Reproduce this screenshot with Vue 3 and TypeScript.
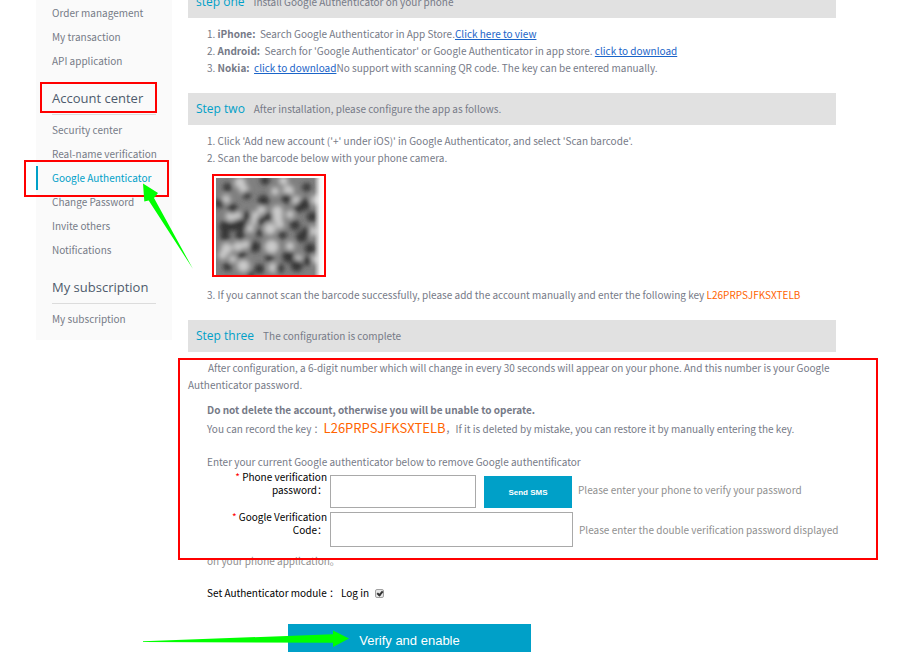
<script setup lang="ts">
import { ref } from 'vue'

interface MenuGroup {
  title: string
  items: string[]
}

const groups: MenuGroup[] = [
  { title: '', items: ['Order management', 'My transaction', 'API application'] },
  {
    title: 'Account center',
    items: [
      'Security center',
      'Real-name verification',
      'Google Authenticator',
      'Change Password',
      'Invite others',
      'Notifications',
    ],
  },
  { title: 'My subscription', items: ['My subscription'] },
]
const active = 'Google Authenticator'
const secret = 'L26PRPSJFKSXTELB'

const smsCode = ref('')
const googleCode = ref('')
const onLogin = ref(true)

// x, y, radius of the smudges in the obscured barcode
const dark: number[][] = [
  [34, 28, 13], [272, 28, 13], [34, 267, 13], [142, 68, 17], [157, 117, 14], [72, 142, 20],
  [27, 147, 18], [50, 146, 14], [27, 174, 15], [72, 174, 14], [264, 80, 18], [248, 90, 14],
  [287, 117, 15], [212, 62, 15], [117, 207, 17], [77, 232, 13], [257, 177, 17], [270, 160, 12],
  [282, 212, 16], [217, 237, 18], [242, 264, 18], [147, 7, 14], [134, 130, 12], [50, 92, 15],
  [237, 142, 15], [92, 114, 13], [10, 77, 14], [275, 250, 14], [160, 240, 13], [130, 274, 15],
  [192, 272, 13], [92, 52, 12], [130, 166, 11], [200, 172, 12], [104, 290, 10],
]
const light: number[][] = [
  [72, 14, 17], [84, 34, 14], [217, 38, 17], [184, 100, 17], [184, 118, 17], [44, 115, 15],
  [64, 115, 14], [82, 264, 19], [167, 207, 21], [32, 212, 17], [66, 206, 15], [90, 200, 12],
  [242, 68, 14], [137, 95, 13], [162, 153, 18], [202, 8, 14], [30, 64, 13], [118, 112, 12],
  [115, 130, 11], [192, 140, 13], [292, 160, 15], [247, 243, 11], [172, 270, 15],
  [222, 205, 13], [102, 152, 12], [297, 245, 13], [20, 232, 13], [177, 40, 12],
  [300, 66, 16], [222, 110, 12], [50, 244, 11],
]
</script>

<template>
  <div class="page">
    <nav class="sidebar">
      <section v-for="(g, i) in groups" :key="i">
        <h2 v-if="g.title">{{ g.title }}</h2>
        <ul>
          <li v-for="item in g.items" :key="item" :class="{ active: item === active }">
            <a href="#">{{ item }}</a>
          </li>
        </ul>
      </section>
    </nav>

    <main class="content">
      <header class="bar first"><h3>step one</h3><span>Install Google Authenticator on your phone</span></header>
      <div class="steps">
        <p>1. <b>iPhone:</b>&nbsp; Search Google Authenticator in App Store.<a href="#">Click here to view</a></p>
        <p>2. <b>Android:</b>&nbsp; Search for 'Google Authenticator' or Google Authenticator in app store. <a href="#">click to download</a></p>
        <p>3. <b>Nokia:</b>&nbsp; <a href="#">click to download</a>No support with scanning QR code. The key can be entered manually.</p>
      </div>

      <header class="bar"><h3>Step two</h3><span>After installation, please configure the app as follows.</span></header>
      <div class="steps">
        <p>1. Click 'Add new account ('+' under iOS)' in Google Authenticator, and select 'Scan barcode'.</p>
        <p>2. Scan the barcode below with your phone camera.</p>
        <div class="qr">
          <svg viewBox="0 0 324 292" preserveAspectRatio="none" aria-hidden="true">
            <defs>
              <filter id="smudge" x="-10%" y="-10%" width="120%" height="120%">
                <feGaussianBlur stdDeviation="8" />
              </filter>
              <linearGradient id="fade">
                <stop offset="0" stop-color="#fff" stop-opacity="0" />
                <stop offset="0.6" stop-color="#fff" stop-opacity="0.9" />
                <stop offset="1" stop-color="#fff" />
              </linearGradient>
            </defs>
            <rect width="324" height="292" fill="#808080" />
            <g filter="url(#smudge)">
              <circle v-for="([x, y, r], i) in light" :key="'l' + i" :cx="x" :cy="y" :r="r" fill="#cacaca" />
              <circle v-for="([x, y, r], i) in dark" :key="'d' + i" :cx="x" :cy="y" :r="r" fill="#343434" />
            </g>
            <rect x="294" width="30" height="292" fill="url(#fade)" />
          </svg>
        </div>
        <p>3. If you cannot scan the barcode successfully, please add the account manually and enter the following key <em>{{ secret }}</em></p>
      </div>

      <header class="bar"><h3>Step three</h3><span>The configuration is complete</span></header>
      <p class="intro">After configuration, a 6-digit number which will change in every 30 seconds will appear on your phone. And this number is your Google Authenticator password.</p>
      <div class="steps notes">
        <p><b>Do not delete the account, otherwise you will be unable to operate.</b></p>
        <p class="record">You can record the key ：<em>{{ secret }}</em>，If it is deleted by mistake, you can restore it by manually entering the key.</p>
        <p>Enter your current Google authenticator below to remove Google authentificator</p>
      </div>

      <form class="form" @submit.prevent>
        <div class="row">
          <label for="sms"><i>*</i> Phone verification password：</label>
          <input id="sms" v-model="smsCode" class="short" type="text" />
          <button type="button" class="send">Send SMS</button>
          <span class="hint">Please enter your phone to verify your password</span>
        </div>
        <div class="row">
          <label for="code"><i>*</i> Google Verification Code：</label>
          <input id="code" v-model="googleCode" class="long" type="text" />
          <span class="hint">Please enter the double verification password displayed</span>
        </div>
        <p class="hint rest">on your phone application。</p>
        <div class="module">
          <span>Set Authenticator module ：</span>
          <label for="login">Log in</label>
          <input id="login" v-model="onLogin" type="checkbox" />
        </div>
        <button type="submit" class="submit">Verify and enable</button>
      </form>
    </main>

    <div class="mark mark-heading"></div>
    <div class="mark mark-item"></div>
    <div class="mark mark-form"></div>
    <svg class="arrows" width="913" height="652" viewBox="0 0 913 652" aria-hidden="true">
      <path d="M143 183.500L158 193L154 198L193 269L148.700 200.500L144.300 201.500Z" />
      <path d="M349 638.500L333 630.500V634.300L143 641.200V642L333 642.700V647Z" />
    </svg>
  </div>
</template>

<style>
body {
  margin: 0;
  background: #fff;
}
</style>

<style scoped>
.page {
  position: relative;
  display: flex;
  align-items: flex-start;
  gap: 16px;
  box-sizing: border-box;
  height: 100vh;
  padding: 0 77px 0 36px;
  overflow: hidden;
  color: #767a87;
  font: 10px/17px "Noto Sans CJK SC", "Open Sans", sans-serif;
}
h2, h3, p, ul {
  margin: 0;
  padding: 0;
  font-weight: normal;
}
em, i {
  font-style: normal;
}
.sidebar {
  flex: 0 0 136px;
  padding: 1px 0 9px;
  background: #fafafa;
}
.sidebar h2 {
  margin: 10px 16px 3px;
  border-bottom: 1px solid #dcdcdc;
  color: #4e5a6c;
  font-family: "Open Sans", sans-serif;
  font-size: 13px;
  line-height: 31px;
}
.sidebar ul {
  list-style: none;
}
.sidebar li {
  padding: 0 0 0 16px;
  line-height: 24px;
  white-space: nowrap;
}
.sidebar a {
  color: inherit;
  text-decoration: none;
}
.sidebar .active {
  padding-left: 14px;
  border-left: 2px solid #00a0c8;
  color: #00a0c8;
}
.content {
  flex: 1;
  min-width: 0;
}
.bar {
  display: flex;
  gap: 9px;
  margin-top: 17px;
  padding: 0 8px;
  background: #e1e1e1;
  line-height: 32px;
}
.bar.first {
  margin-top: -14px;
}
.bar h3 {
  color: #00a0c8;
  font-family: "Open Sans", sans-serif;
  font-size: 12px;
}
.steps {
  margin-top: 7px;
  padding-left: 19px;
  white-space: nowrap;
}
.notes {
  margin-top: 8px;
}
.steps a {
  color: #1a64c8;
}
.qr {
  display: flex;
  width: 108px;
  height: 97px;
  margin: 8px 0 9px 5px;
  padding: 2px 0 0 2px;
  border: 2px solid #f00;
}
.qr svg {
  width: 108px;
  height: 97px;
}
em {
  color: #ff6400;
}
.intro {
  margin: 7px -8px 0 0;
  text-indent: 20px;
}
.record {
  margin: 2px 0 16px;
}
.record em {
  font-size: 13px;
  line-height: 1;
}
.form {
  padding-left: 19px;
}
.row {
  display: flex;
  align-items: flex-start;
  height: 40px;
  white-space: nowrap;
}
.row label {
  flex: 0 0 120px;
  margin-right: 3px;
  color: #000;
  line-height: 13px;
  text-align: right;
  white-space: normal;
}
.row i {
  color: #f00;
}
.row input {
  flex: none;
  box-sizing: border-box;
  border: 1px solid #a9a9a9;
  background: #fff;
}
.short {
  width: 146px;
  height: 33px;
  margin-top: 5px;
}
.long {
  width: 243px;
  height: 35px;
  margin-top: 2px;
}
button {
  padding: 0;
  border: 0;
  background: #00a0c8;
  color: #fff;
  font-family: "Liberation Sans", Arial, sans-serif;
}
.send {
  flex: none;
  width: 88px;
  height: 32px;
  margin: 6px 0 0 8px;
  font-size: 8px;
  font-weight: bold;
}
.hint {
  color: #909090;
}
.row .hint {
  margin: 11px 0 0 6px;
}
.rest {
  margin-top: 2px;
}
.module {
  display: flex;
  align-items: center;
  margin-top: 15px;
  color: #000;
}
.module label {
  margin-left: 2px;
}
.module input {
  display: flex;
  justify-content: center;
  box-sizing: border-box;
  width: 9px;
  height: 9px;
  margin: 2px 0 0 6px;
  border: 1px solid #a0a0a0;
  border-radius: 2px;
  background: #e6e6e6;
  appearance: none;
}
.module input:checked::after {
  width: 2px;
  height: 4px;
  border: solid #333;
  border-width: 0 2px 2px 0;
  content: "";
  transform: rotate(40deg);
}
.submit {
  display: block;
  width: 243px;
  height: 32px;
  margin: 23px 0 0 81px;
  font-size: 13px;
}
.mark {
  position: absolute;
  box-sizing: border-box;
  border: 2px solid #f00;
}
.mark-heading {
  top: 82px;
  left: 40px;
  width: 117px;
  height: 31px;
}
.mark-item {
  top: 160px;
  left: 24px;
  width: 145px;
  height: 37px;
}
.mark-form {
  top: 358px;
  left: 178px;
  width: 700px;
  height: 202px;
}
.arrows {
  position: absolute;
  top: 0;
  left: 0;
  fill: #0f0;
  pointer-events: none;
}
</style>
